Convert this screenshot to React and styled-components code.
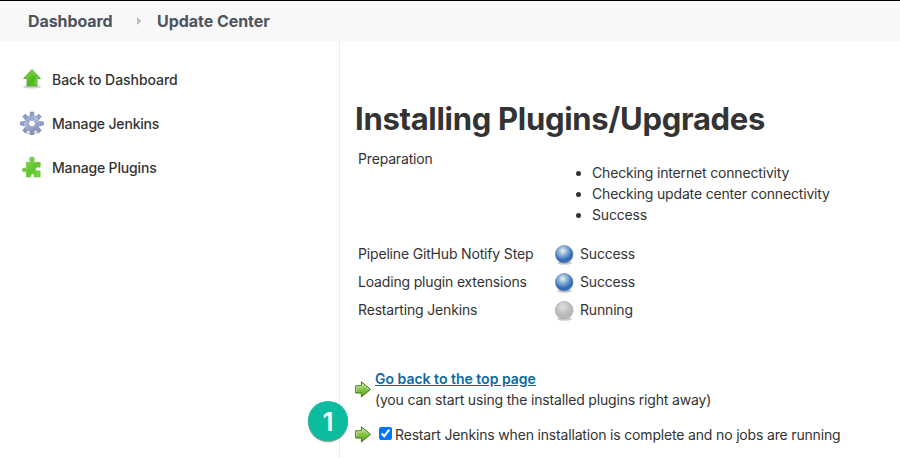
import React from "react";
import styled, { createGlobalStyle } from "styled-components";

const GlobalStyle = createGlobalStyle`
  * { box-sizing: border-box; }
  body {
    margin: 0;
    overflow: hidden;
    background: #fff;
    color: #333;
    font-family: Inter, "Liberation Sans", sans-serif;
    font-size: 14px;
    line-height: 21px;
  }
`;

const Page = styled.div`
  display: flex;
  flex-direction: column;
  height: 458px;
`;

const Breadcrumbs = styled.nav`
  display: flex;
  align-items: center;
  height: 41px;
  padding-left: 28px;
  border-top: 1px solid #000;
  background: #f8f8f8;
  color: #4d545d;
  font-size: 16px;
  font-weight: 700;
  white-space: nowrap;
`;

const Crumb = styled.span`
  width: ${(p) => p.$width};
  letter-spacing: ${(p) => p.$tracking};
`;

const CrumbArrow = styled.svg`
  margin: 0 15px 0 24px;
`;

const Body = styled.div`
  display: flex;
  flex: 1;
`;

const Sidebar = styled.aside`
  width: 340px;
  padding: 16px 0 0 20px;
  border-right: 1px solid #ececec;
`;

const Task = styled.a`
  display: flex;
  align-items: center;
  gap: 8px;
  height: 44px;
  font-weight: 500;
  letter-spacing: ${(p) => p.$tracking};
`;

const Main = styled.main`
  flex: 1;
  padding: 58px 0 0 15px;
  white-space: nowrap;
  letter-spacing: -0.17px;
`;

const Title = styled.h1`
  margin: 0;
  font-size: 31px;
  font-weight: 700;
  line-height: 40px;
  letter-spacing: -0.3px;
`;

const Log = styled.div`
  display: grid;
  grid-template-columns: 197px 1fr;
  padding-left: 3px;
  margin-top: 9px;
`;

const LogName = styled.div`
  line-height: ${(p) => (p.$tall ? "21px" : "28px")};
`;

const Checks = styled.ul`
  height: 92px;
  margin: 0;
  padding: 14px 0 0 37px;
`;

const Status = styled.div`
  display: flex;
  align-items: center;
  gap: 6px;
  height: 28px;
  line-height: 22px;

  svg {
    margin-top: 2px;
  }
`;

const Actions = styled.div`
  display: flex;
  flex-direction: column;
  gap: 14px;
  margin-top: 44px;
`;

const Action = styled.div`
  display: flex;
  align-items: center;
`;

const ActionText = styled.div`
  margin-left: 4px;
`;

const TopLink = styled.a`
  display: block;
  color: #0b6aa2;
  font-weight: 600;
  letter-spacing: 0;
  text-decoration: underline;
`;

const Checkbox = styled.input`
  width: 13px;
  height: 13px;
  margin: -3px 3px 0 8px;
  accent-color: #0075ff;
`;

const Step = styled.div`
  position: absolute;
  left: 308px;
  top: 401px;
  display: flex;
  align-items: center;
  justify-content: center;
  width: 40px;
  height: 40px;
  border-radius: 50%;
  background: #0bbc9f;
  box-shadow: 0 1px 1px rgba(0, 0, 0, 0.45);
  color: #fff;
  font: 600 26px Inter, sans-serif;
`;

function UpIcon() {
  return (
    <svg width="24" height="24" viewBox="0 0 24 24">
      <defs>
        <linearGradient id="up" x1="0" y1="0" x2="1" y2="1">
          <stop offset="0" stopColor="#8fdc52" />
          <stop offset=".6" stopColor="#4fb91c" />
          <stop offset="1" stopColor="#6fd036" />
        </linearGradient>
      </defs>
      <ellipse cx="12" cy="19.7" rx="9" ry="1.7" fill="#000" opacity=".18" />
      <path d="M12 2.5L20.5 11.5H17V19H7V11.5H3.5Z" fill="url(#up)" stroke="#56a238" strokeWidth=".8" strokeLinejoin="round" />
      <path d="M12 4.1L18 10.5H15.8V17.8" fill="none" stroke="#a9ed70" strokeWidth=".5" />
    </svg>
  );
}

function GearIcon() {
  const teeth = [0, 45, 90, 135, 180, 225, 270, 315];
  return (
    <svg width="24" height="24" viewBox="0 -.5 24 24">
      <defs>
        <linearGradient id="gear" x1="0" y1="0" x2=".5" y2="1">
          <stop offset="0" stopColor="#7f9bce" />
          <stop offset=".5" stopColor="#bac4de" />
          <stop offset="1" stopColor="#8b90b8" />
        </linearGradient>
      </defs>
      <ellipse cx="12" cy="21.5" rx="8" ry="1.5" fill="#000" opacity=".14" />
      {teeth.map((a) => (
        <path key={a} d="M9.8 5.5L10.4 .6H13.6L14.2 5.5Z" fill={a > 90 && a < 270 ? "#9296bc" : "#8aa2cf"} stroke="#6e7ca6" strokeWidth=".6" transform={`rotate(${a} 12 12)`} />
      ))}
      <circle cx="12" cy="12" r="7.7" fill="url(#gear)" />
      <circle cx="12" cy="12" r="5" fill="none" stroke="#91a0c6" strokeWidth="1" />
      <circle cx="12" cy="12" r="3.4" fill="#fff" stroke="#7886b0" strokeWidth=".7" />
    </svg>
  );
}

function PuzzleIcon() {
  return (
    <svg width="24" height="24" viewBox="0 0 24 24">
      <defs>
        <linearGradient id="puzzle" x1="0" y1="0" x2="1" y2="1">
          <stop offset="0" stopColor="#8fd856" />
          <stop offset=".6" stopColor="#62c52e" />
          <stop offset="1" stopColor="#74dc3c" />
        </linearGradient>
      </defs>
      <path d="M6.3 7.2H10.2Q10.8 6.6 9.7 5.2Q9 2 12 1.9Q14.9 2 14.3 5.2Q13.4 6.6 14 7.2H20.2V12Q19.4 12.7 18.2 12.1Q15.4 11.8 15.4 14.2Q15.5 16.4 18.2 16Q19.5 15.5 20.2 16.3V21.9H14.2Q13.6 21.3 14.3 20.4Q14 18.7 12.4 18.7Q10.6 18.8 10.8 20.6Q11.1 21.4 10.6 21.9H6.3V16.7Q5.7 16 4.6 16.8Q2.3 17.1 2.3 14.9Q2.3 12.8 4.6 13Q5.7 13.8 6.3 13.1Z" fill="url(#puzzle)" stroke="#6bbb43" strokeWidth=".6" />
    </svg>
  );
}

function Ball({ id, colors, edge }) {
  return (
    <svg width="19" height="22" viewBox="0 0 19 22">
      <defs>
        <radialGradient id={id} cx=".42" cy=".3" r=".7">
          <stop offset="0" stopColor={colors[0]} />
          <stop offset=".38" stopColor={colors[1]} />
          <stop offset=".8" stopColor={colors[2]} />
          <stop offset="1" stopColor={colors[3]} />
        </radialGradient>
      </defs>
      <ellipse cx="9.5" cy="18.8" rx="7.5" ry="2" fill="#000" opacity=".2" />
      <circle cx="9.2" cy="10.3" r="8.8" fill={`url(#${id})`} stroke={edge} strokeWidth=".7" />
    </svg>
  );
}

const BLUE = ["#edf4e4", "#86aedb", "#2e65ad", "#4b80c2"];
const GREY = ["#e0e0e0", "#cacaca", "#b5b5b5", "#c2c2c2"];

function NextArrow({ id }) {
  return (
    <svg width="16" height="17" viewBox="0 0 16 17">
      <defs>
        <linearGradient id={id} x1="0" y1="0" x2="0" y2="1">
          <stop offset="0" stopColor="#b5df76" />
          <stop offset="1" stopColor="#59a71c" />
        </linearGradient>
      </defs>
      <path d="M.7 4.8H6.4V.8L15.5 8.4L6.4 16V12H.7Z" fill={`url(#${id})`} stroke="#397c16" strokeWidth="1" strokeLinejoin="round" />
      <path d="M1.7 11V5.9H7.4V3.1L13.9 8.4" fill="none" stroke="#d6efaa" strokeWidth=".7" />
    </svg>
  );
}

export default function App() {
  return (
    <Page>
      <GlobalStyle />
      <Breadcrumbs>
        <Crumb $width="85px" $tracking="-0.08px">Dashboard</Crumb>
        <CrumbArrow width="5" height="8" viewBox="0 0 5 8">
          <path d="M0 0L4.3 4L0 8Z" fill="#bbb" />
        </CrumbArrow>
        <Crumb $width="114px" $tracking="-0.04px">Update Center</Crumb>
      </Breadcrumbs>
      <Body>
        <Sidebar>
          <Task $tracking="-0.06px"><UpIcon />Back to Dashboard</Task>
          <Task $tracking="-0.18px"><GearIcon />Manage Jenkins</Task>
          <Task $tracking="-0.16px"><PuzzleIcon />Manage Plugins</Task>
        </Sidebar>
        <Main>
          <Title>Installing Plugins/Upgrades</Title>
          <Log>
            <LogName $tall>Preparation</LogName>
            <Checks>
              <li>Checking internet connectivity</li>
              <li>Checking update center connectivity</li>
              <li>Success</li>
            </Checks>
            <LogName>Pipeline GitHub Notify Step</LogName>
            <Status><Ball id="ball1" colors={BLUE} edge="#5d86b8" />Success</Status>
            <LogName>Loading plugin extensions</LogName>
            <Status><Ball id="ball2" colors={BLUE} edge="#5d86b8" />Success</Status>
            <LogName>Restarting Jenkins</LogName>
            <Status><Ball id="ball3" colors={GREY} edge="#a3a3a3" />Running</Status>
          </Log>
          <Actions>
            <Action>
              <NextArrow id="next1" />
              <ActionText>
                <TopLink>Go back to the top page</TopLink>
                (you can start using the installed plugins right away)
              </ActionText>
            </Action>
            <Action>
              <NextArrow id="next2" />
              <Checkbox type="checkbox" defaultChecked />
              <span>Restart Jenkins when installation is complete and no jobs are running</span>
            </Action>
          </Actions>
        </Main>
      </Body>
      <Step>1</Step>
    </Page>
  );
}
